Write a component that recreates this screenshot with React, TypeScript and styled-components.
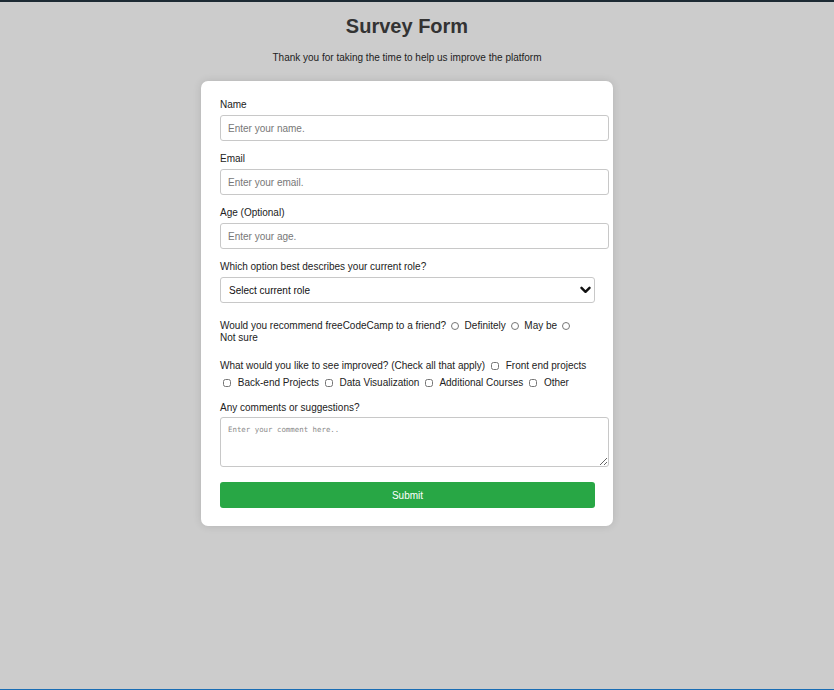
import React from "react";
import styled, { createGlobalStyle } from "styled-components";

const GlobalStyle = createGlobalStyle`
  html, body { margin: 0; padding: 0; }
  body {
    background: #cccccc;
    font-family: "Liberation Sans", Arial, sans-serif;
  }
`;

const Page = styled.div`
  min-height: 690px;
  box-sizing: border-box;
  border-top: 2px solid #1c2a33;
  border-bottom: 1px solid #1a6db4;
  padding-right: 20px;
  display: flex;
  flex-direction: column;
  align-items: center;
`;

const Title = styled.h1`
  margin: 12px 0 0;
  font-size: 20px;
  line-height: 24px;
  font-weight: bold;
  color: #333333;
`;

const Subtitle = styled.p`
  margin: 14px 0 0;
  font-size: 10px;
  line-height: 12px;
  color: #222;
`;

const Card = styled.form`
  margin-top: 17px;
  width: 373px;
  padding: 17px 20px 18px 19px;
  background: #ffffff;
  border-radius: 7px;
  box-shadow: 0 0 8px rgba(0, 0, 0, 0.12);
`;

const Group = styled.div<{ $mb?: number }>`
  margin-bottom: ${(p) => (p.$mb ?? 11)}px;
`;

const Label = styled.label<{ $gap?: number }>`
  display: block;
  font-size: 10px;
  line-height: 12px;
  color: #222;
  padding-top: 1px;
  margin-bottom: ${(p) => (p.$gap ?? 4)}px;
`;

const TextInput = styled.input`
  display: block;
  width: 373px;
  height: 24px;
  box-sizing: content-box;
  padding: 0 7px;
  margin: 0;
  border: 1px solid #c8c8c8;
  border-radius: 3px;
  font-family: "Liberation Sans", Arial, sans-serif;
  font-size: 10px;
  color: #222;
  background: #fff;
  outline: none;
  &::placeholder { color: #777; }
`;

const SelectWrap = styled.div`
  position: relative;
  width: 375px;
`;

const Select = styled.select`
  display: block;
  width: 375px;
  height: 26px;
  box-sizing: border-box;
  appearance: none;
  -webkit-appearance: none;
  padding: 0 8px;
  margin: 0;
  border: 1px solid #c8c8c8;
  border-radius: 3px;
  font-family: "Liberation Sans", Arial, sans-serif;
  font-size: 10px;
  color: #111;
  background: #fff;
  outline: none;
`;

const Chevron = styled.svg`
  position: absolute;
  right: 4px;
  top: 9px;
  width: 11px;
  height: 8px;
  pointer-events: none;
`;

const InlineText = styled.div<{ $lh: number }>`
  font-size: 10px;
  line-height: ${(p) => p.$lh}px;
  color: #222;
`;

const Option = styled.span`
  white-space: nowrap;
`;

const Radio = styled.input`
  width: 8px;
  height: 8px;
  margin: 0 3px 0 2px;
  vertical-align: -1px;
`;

const Check = styled.input`
  width: 8px;
  height: 8px;
  margin: 0 4px 0 3px;
  vertical-align: -1px;
`;

const TextArea = styled.textarea`
  display: block;
  width: 373px;
  height: 41px;
  box-sizing: content-box;
  padding: 7px 7px 0;
  margin: 0;
  border: 1px solid #c8c8c8;
  border-radius: 3px;
  font-family: "DejaVu Sans Mono", "Liberation Mono", monospace;
  font-size: 7.4px;
  line-height: 10px;
  background: #fff;
  outline: none;
  &::placeholder { color: #8a8a8a; }
`;

const Submit = styled.button`
  display: block;
  width: 375px;
  height: 26px;
  margin-top: 15px;
  border: none;
  border-radius: 3px;
  background: #28a745;
  color: #fff;
  font-family: "Liberation Sans", Arial, sans-serif;
  font-size: 10px;
  cursor: pointer;
`;

export default function App() {
  return (
    <>
      <GlobalStyle />
      <Page>
        <Title>Survey Form</Title>
        <Subtitle>Thank you for taking the time to help us improve the platform</Subtitle>
        <Card onSubmit={(e) => e.preventDefault()}>
          <Group>
            <Label htmlFor="name">Name</Label>
            <TextInput id="name" type="text" placeholder="Enter your name." />
          </Group>
          <Group>
            <Label htmlFor="email">Email</Label>
            <TextInput id="email" type="email" placeholder="Enter your email." />
          </Group>
          <Group>
            <Label htmlFor="age">Age (Optional)</Label>
            <TextInput id="age" type="number" placeholder="Enter your age." />
          </Group>
          <Group $mb={17}>
            <Label htmlFor="role">Which option best describes your current role?</Label>
            <SelectWrap>
              <Select id="role" defaultValue="">
                <option value="">Select current role</option>
                <option value="student">Student</option>
                <option value="job">Full time job</option>
                <option value="learner">Full time learner</option>
                <option value="other">Other</option>
              </Select>
              <Chevron viewBox="0 0 11 8">
                <path d="M1.5 1.8 L5.5 5.8 L9.5 1.8" fill="none" stroke="#111" strokeWidth="2.4" strokeLinecap="round" strokeLinejoin="round" />
              </Chevron>
            </SelectWrap>
          </Group>
          <Group $mb={13}>
            <InlineText $lh={12}>
              Would you recommend freeCodeCamp to a friend?{" "}
              <Radio type="radio" name="rec" /> <Option>Definitely</Option>{" "}
              <Radio type="radio" name="rec" /> <Option>May be</Option>{" "}
              <Radio type="radio" name="rec" /> <Option>Not sure</Option>
            </InlineText>
          </Group>
          <Group $mb={10}>
            <InlineText $lh={17}>
              What would you like to see improved? (Check all that apply){" "}
              <Check type="checkbox" /> <Option>Front end projects</Option>{" "}
              <Check type="checkbox" /> <Option>Back-end Projects</Option>{" "}
              <Check type="checkbox" /> <Option>Data Visualization</Option>{" "}
              <Check type="checkbox" /> <Option>Additional Courses</Option>{" "}
              <Check type="checkbox" /> <Option>Other</Option>
            </InlineText>
          </Group>
          <Group $mb={0}>
            <Label htmlFor="comments" $gap={3}>Any comments or suggestions?</Label>
            <TextArea id="comments" placeholder="Enter your comment here.." />
          </Group>
          <Submit type="submit">Submit</Submit>
        </Card>
      </Page>
    </>
  );
}
